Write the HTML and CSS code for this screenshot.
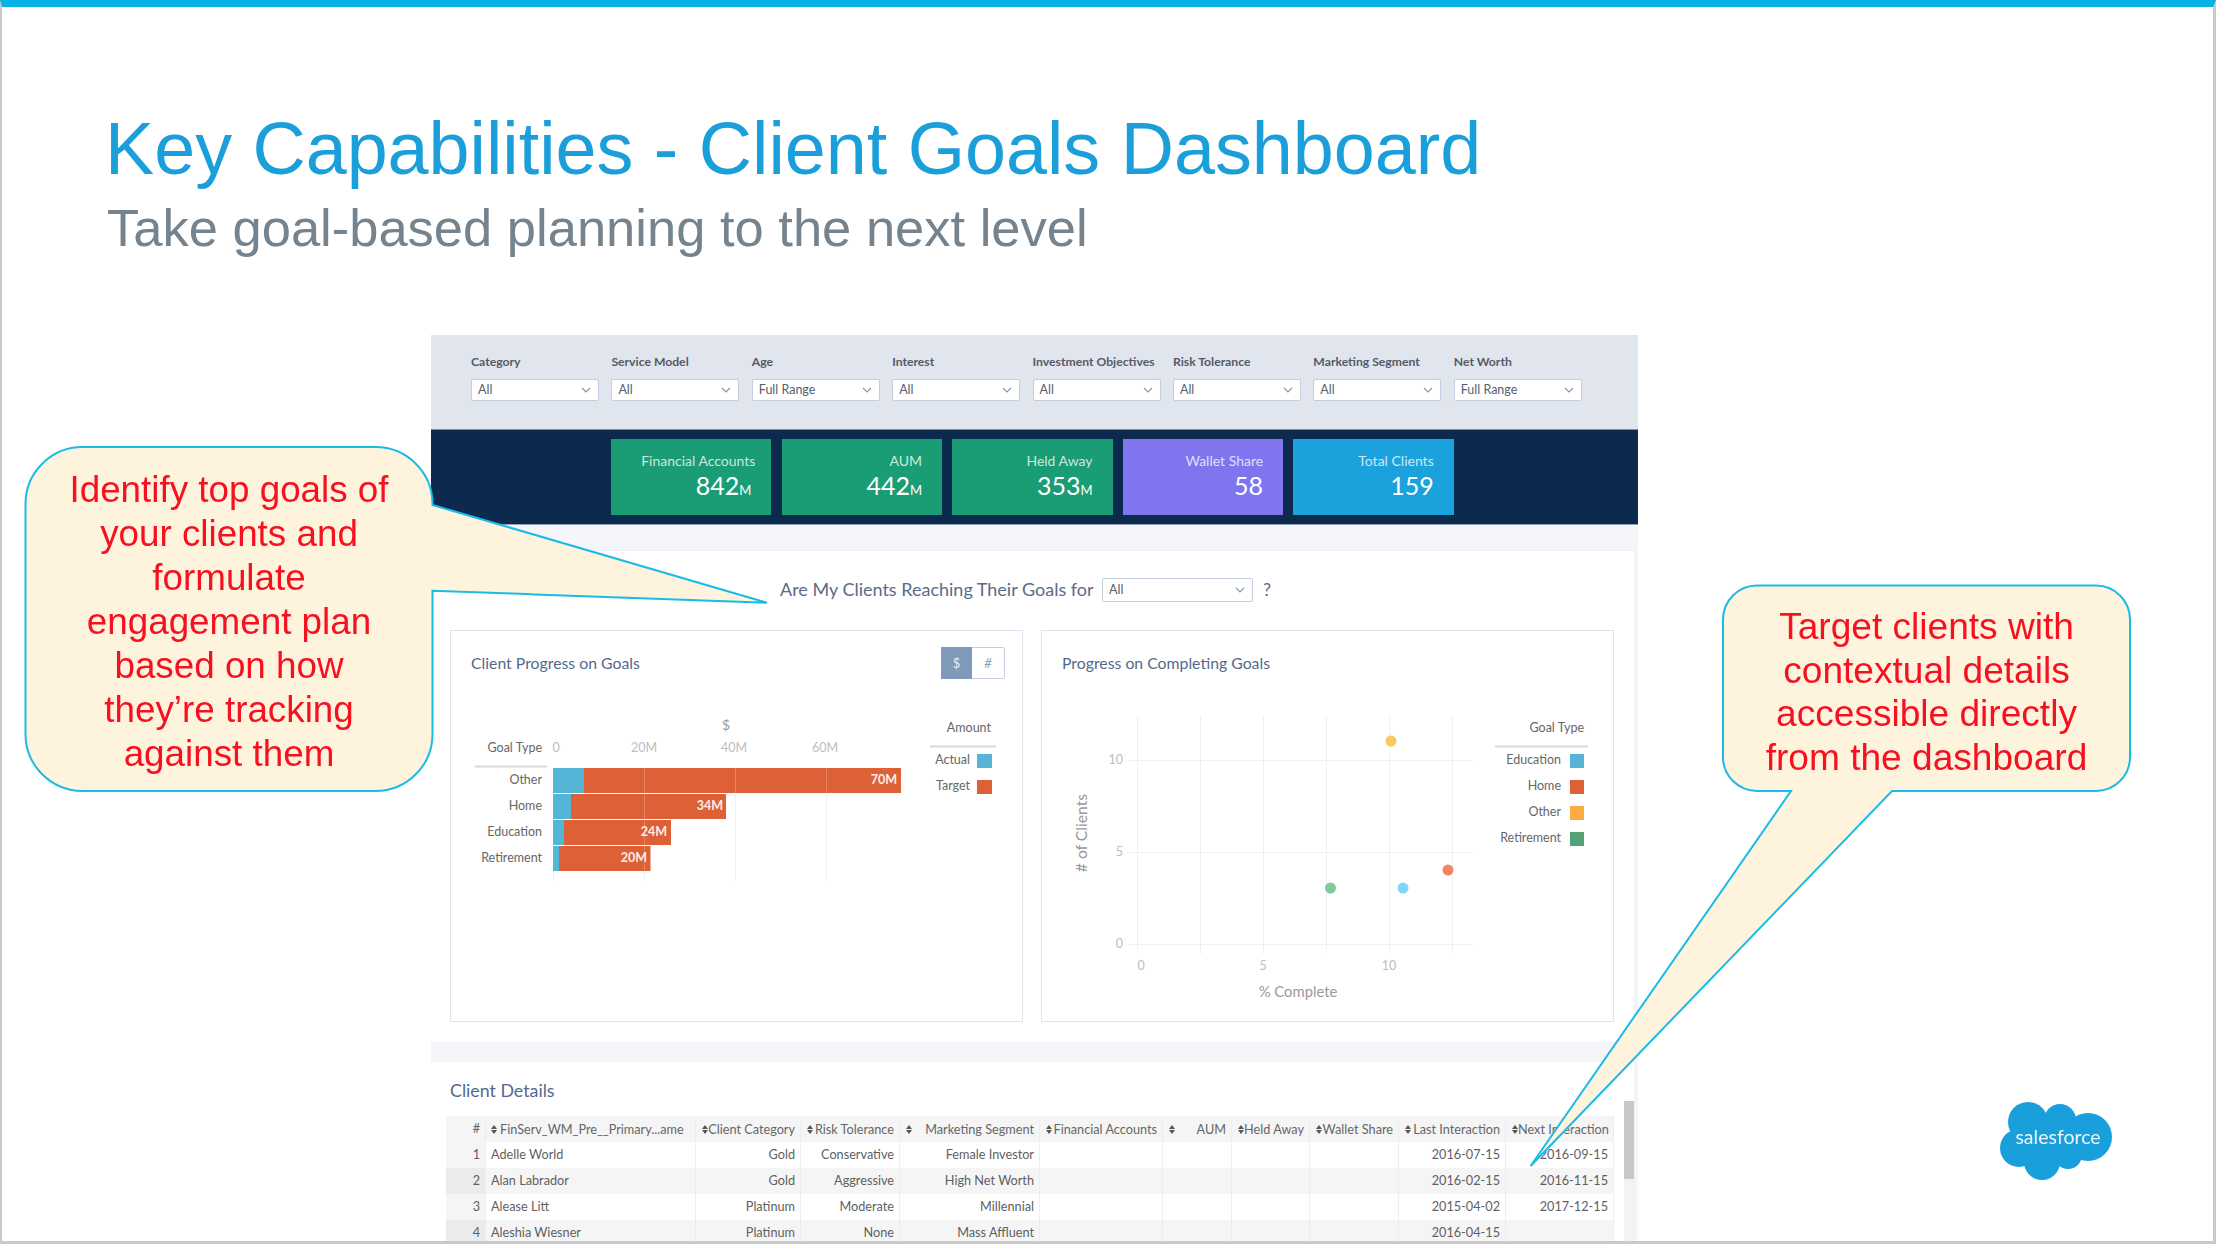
FILE: index.html
```html
<!DOCTYPE html>
<html lang="en">
<head>
<meta charset="utf-8">
<title>Key Capabilities - Client Goals Dashboard</title>
<link rel="stylesheet" href="styles.css">
</head>
<body>
<main class="slide">
  <header class="slide-head">
    <h1 class="slide-title">Key Capabilities - Client Goals Dashboard</h1>
    <p class="slide-sub">Take goal-based planning to the next level</p>
  </header>

  <section class="dash">
    <div class="filters">
      <div class="filter"><label class="filter-label">Category</label><div class="select"><span>All</span><svg class="chev" viewBox="0 0 10 6"><path d="M1 1l4 4 4-4"/></svg></div></div>
      <div class="filter"><label class="filter-label">Service Model</label><div class="select"><span>All</span><svg class="chev" viewBox="0 0 10 6"><path d="M1 1l4 4 4-4"/></svg></div></div>
      <div class="filter"><label class="filter-label">Age</label><div class="select"><span>Full Range</span><svg class="chev" viewBox="0 0 10 6"><path d="M1 1l4 4 4-4"/></svg></div></div>
      <div class="filter"><label class="filter-label">Interest</label><div class="select"><span>All</span><svg class="chev" viewBox="0 0 10 6"><path d="M1 1l4 4 4-4"/></svg></div></div>
      <div class="filter"><label class="filter-label">Investment Objectives</label><div class="select"><span>All</span><svg class="chev" viewBox="0 0 10 6"><path d="M1 1l4 4 4-4"/></svg></div></div>
      <div class="filter"><label class="filter-label">Risk Tolerance</label><div class="select"><span>All</span><svg class="chev" viewBox="0 0 10 6"><path d="M1 1l4 4 4-4"/></svg></div></div>
      <div class="filter"><label class="filter-label">Marketing Segment</label><div class="select"><span>All</span><svg class="chev" viewBox="0 0 10 6"><path d="M1 1l4 4 4-4"/></svg></div></div>
      <div class="filter"><label class="filter-label">Net Worth</label><div class="select"><span>Full Range</span><svg class="chev" viewBox="0 0 10 6"><path d="M1 1l4 4 4-4"/></svg></div></div>
    </div>

    <div class="kpis">
      <div class="kpi kpi-green"><div class="kpi-label kpi-label-wide">Financial Accounts</div><div class="kpi-value">842<small>M</small></div></div>
      <div class="kpi kpi-green"><div class="kpi-label">AUM</div><div class="kpi-value">442<small>M</small></div></div>
      <div class="kpi kpi-green"><div class="kpi-label">Held Away</div><div class="kpi-value">353<small>M</small></div></div>
      <div class="kpi kpi-purple"><div class="kpi-label">Wallet Share</div><div class="kpi-value">58</div></div>
      <div class="kpi kpi-blue"><div class="kpi-label">Total Clients</div><div class="kpi-value">159</div></div>
    </div>

    <div class="panel">
      <div class="question">
        <span class="question-text">Are My Clients Reaching Their Goals for</span>
        <div class="select select-q"><span>All</span><svg class="chev" viewBox="0 0 10 6"><path d="M1 1l4 4 4-4"/></svg></div>
        <span class="question-mark">?</span>
      </div>

      <div class="charts">
        <article class="card">
          <div class="card-head">
            <h2 class="card-title">Client Progress on Goals</h2>
            <div class="toggle"><span class="toggle-on">$</span><span class="toggle-off">#</span></div>
          </div>
          <svg class="plot" viewBox="451 690 571 330">
            <g class="grid">
              <path d="M553.500 767V880M644.500 767V880M735.500 767V880M826.500 767V880"/>
            </g>
            <text class="axis-title" x="726" y="729" text-anchor="middle">$</text>
            <text class="lbl" x="542" y="751" text-anchor="end">Goal Type</text>
            <g class="tick" text-anchor="middle">
              <text x="556" y="751">0</text>
              <text x="644" y="751">20M</text>
              <text x="734" y="751">40M</text>
              <text x="825" y="751">60M</text>
            </g>
            <path class="rule" d="M475 765.500H547M930 745.500H996"/>
            <g class="lbl" text-anchor="end">
              <text x="542" y="783">Other</text>
              <text x="542" y="809">Home</text>
              <text x="542" y="835">Education</text>
              <text x="542" y="861">Retirement</text>
              <text x="991" y="731">Amount</text>
              <text x="970" y="763">Actual</text>
              <text x="970" y="789">Target</text>
            </g>
            <rect class="c-red" x="553" y="767" width="348" height="25"/>
            <rect class="c-red" x="553" y="793" width="173" height="25"/>
            <rect class="c-red" x="553" y="819" width="118" height="25"/>
            <rect class="c-red" x="553" y="845" width="97.500" height="25"/>
            <rect class="c-blue" x="553" y="767" width="31" height="25"/>
            <rect class="c-blue" x="553" y="793" width="18" height="25"/>
            <rect class="c-blue" x="553" y="819" width="11" height="25"/>
            <rect class="c-blue" x="553" y="845" width="6" height="25"/>
            <path class="grid-over" d="M644.500 767V870M735.500 767V818M826.500 767V792"/>
            <g class="bar-val" text-anchor="end">
              <text x="897" y="783">70M</text>
              <text x="723" y="809">34M</text>
              <text x="667" y="835">24M</text>
              <text x="647" y="861">20M</text>
            </g>
            <rect class="c-blue" x="977" y="753" width="15" height="14"/>
            <rect class="c-red" x="977" y="779" width="15" height="14"/>
          </svg>
        </article>

        <article class="card">
          <div class="card-head">
            <h2 class="card-title">Progress on Completing Goals</h2>
          </div>
          <svg class="plot" viewBox="1042 690 571 330">
            <g class="grid">
              <path d="M1137.500 715V953M1200.500 715V953M1263.500 715V953M1326.500 715V953M1389.500 715V953M1452.500 715V953"/>
              <path d="M1127 759.500H1473M1127 851.500H1473M1127 943.500H1473"/>
            </g>
            <g class="tick" text-anchor="end">
              <text x="1123" y="763">10</text>
              <text x="1123" y="855">5</text>
              <text x="1123" y="947">0</text>
            </g>
            <g class="tick" text-anchor="middle">
              <text x="1141" y="969">0</text>
              <text x="1263" y="969">5</text>
              <text x="1389" y="969">10</text>
            </g>
            <text class="axis-title axis-x" x="1298" y="996" text-anchor="middle">% Complete</text>
            <text class="axis-title axis-y" x="1087" y="832" text-anchor="middle" transform="rotate(-90 1087 832)"># of Clients</text>
            <circle cx="1391" cy="740" r="5.500" fill="#f9c95f"/>
            <circle cx="1330.500" cy="887" r="5.500" fill="#7fc99b"/>
            <circle cx="1403" cy="887" r="5.500" fill="#7dd6f6"/>
            <circle cx="1448" cy="869" r="5.500" fill="#f58460"/>
            <path class="rule" d="M1495 745.500H1588"/>
            <g class="lbl" text-anchor="end">
              <text x="1584" y="731">Goal Type</text>
              <text x="1561" y="763">Education</text>
              <text x="1561" y="789">Home</text>
              <text x="1561" y="815">Other</text>
              <text x="1561" y="841">Retirement</text>
            </g>
            <rect class="c-blue" x="1570" y="753" width="14" height="14"/>
            <rect class="c-red" x="1570" y="779" width="14" height="14"/>
            <rect class="c-orange" x="1570" y="805" width="14" height="14"/>
            <rect class="c-green" x="1570" y="831" width="14" height="14"/>
          </svg>
        </article>
      </div>
    </div>

    <div class="details">
      <h2 class="details-title">Client Details</h2>
      <div class="table-wrap">
        <div class="table">
          <div class="row row-head">
            <div class="cell">#</div>
            <div class="cell cell-name"><i class="sort"></i>FinServ_WM_Pre__Primary...ame</div>
            <div class="cell cell-sort"><i class="sort"></i>Client Category</div>
            <div class="cell cell-sort"><i class="sort"></i>Risk Tolerance</div>
            <div class="cell cell-sort"><i class="sort"></i>Marketing Segment</div>
            <div class="cell cell-sort"><i class="sort"></i>Financial Accounts</div>
            <div class="cell cell-sort"><i class="sort"></i>AUM</div>
            <div class="cell cell-sort"><i class="sort"></i>Held Away</div>
            <div class="cell cell-sort"><i class="sort"></i>Wallet Share</div>
            <div class="cell cell-sort"><i class="sort"></i>Last Interaction</div>
            <div class="cell cell-sort"><i class="sort"></i>Next Interaction</div>
          </div>
          <div class="row">
            <div class="cell cell-idx">1</div><div class="cell cell-left">Adelle World</div><div class="cell">Gold</div><div class="cell">Conservative</div><div class="cell">Female Investor</div><div class="cell"></div><div class="cell"></div><div class="cell"></div><div class="cell"></div><div class="cell">2016-07-15</div><div class="cell">2016-09-15</div>
          </div>
          <div class="row row-alt">
            <div class="cell cell-idx">2</div><div class="cell cell-left">Alan Labrador</div><div class="cell">Gold</div><div class="cell">Aggressive</div><div class="cell">High Net Worth</div><div class="cell"></div><div class="cell"></div><div class="cell"></div><div class="cell"></div><div class="cell">2016-02-15</div><div class="cell">2016-11-15</div>
          </div>
          <div class="row">
            <div class="cell cell-idx">3</div><div class="cell cell-left">Alease Litt</div><div class="cell">Platinum</div><div class="cell">Moderate</div><div class="cell">Millennial</div><div class="cell"></div><div class="cell"></div><div class="cell"></div><div class="cell"></div><div class="cell">2015-04-02</div><div class="cell">2017-12-15</div>
          </div>
          <div class="row row-alt">
            <div class="cell cell-idx">4</div><div class="cell cell-left">Aleshia Wiesner</div><div class="cell">Platinum</div><div class="cell">None</div><div class="cell">Mass Affluent</div><div class="cell"></div><div class="cell"></div><div class="cell"></div><div class="cell"></div><div class="cell">2016-04-15</div><div class="cell"></div>
          </div>
        </div>
        <div class="scrollbar"><div class="scroll-thumb"></div></div>
      </div>
    </div>
  </section>

  <aside class="callout callout-a">
    <svg class="callout-shape" viewBox="24 445 746 349"><path d="M82.500 447H375.500A57 57 0 0 1 432.500 504V505L767 602.700 432.500 590.700V734A57 57 0 0 1 375.500 791H82.500A57 57 0 0 1 25.500 734V504A57 57 0 0 1 82.500 447Z"/></svg>
    <p class="callout-text"><span>Identify top goals of</span><span>your clients and</span><span>formulate</span><span>engagement plan</span><span>based on how</span><span>they’re tracking</span><span>against them</span></p>
  </aside>

  <aside class="callout callout-b">
    <svg class="callout-shape" viewBox="1528 584 604 584"><path d="M1757 585.500H2096A34 34 0 0 1 2130 619.500V757A34 34 0 0 1 2096 791H1892L1530.600 1166 1791 791H1757A34 34 0 0 1 1723 757V619.500A34 34 0 0 1 1757 585.500Z"/></svg>
    <p class="callout-text"><span>Target clients with</span><span>contextual details</span><span>accessible directly</span><span>from the dashboard</span></p>
  </aside>

  <svg class="logo" viewBox="1998 1100 116 82" role="img" aria-label="salesforce">
    <g fill="#1a9fdd">
      <circle cx="2028" cy="1122" r="20"/>
      <circle cx="2060" cy="1120" r="16"/>
      <circle cx="2088" cy="1137" r="24"/>
      <circle cx="2019" cy="1148" r="19"/>
      <circle cx="2042" cy="1162" r="18"/>
      <circle cx="2068" cy="1155" r="14"/>
      <rect x="2022" y="1120" width="60" height="36"/>
    </g>
    <text class="logo-text" x="2058" y="1144" text-anchor="middle">salesforce</text>
  </svg>
</main>
</body>
</html>
```

FILE: styles.css
```css
* { box-sizing: border-box; }
html, body { margin: 0; padding: 0; }
body { background: #fff; overflow: hidden; font-family: "Liberation Sans", Arial, sans-serif; }

.slide { position: relative; width: 2216px; height: 1244px; overflow: hidden; background: #fff; padding-top: 105px; }
.slide::after { content: ""; position: absolute; inset: 0; border: 2px solid #c9c9c9; border-top: 7px solid #08b1e6; border-right-width: 3px; border-bottom-width: 3px; pointer-events: none; z-index: 5; }

.slide-head { padding-left: 105px; filter: blur(.4px); }
.slide-title { margin: 0; font-size: 73.700px; line-height: 88px; font-weight: 400; color: #1a9fdb; }
.slide-sub { margin: 6px 0 0 2px; font-size: 52.500px; line-height: 58px; font-weight: 400; color: #74838d; }

.dash { width: 1207px; margin: 0 0 0 431px; position: absolute; top: 335px; left: 0; background: #f4f6f9; font-family: Lato, "Open Sans", sans-serif; filter: blur(.7px); }

.filters { height: 95px; padding: 19px 0 0 40px; background: #e0e5ee; border-bottom: 1px solid #7f8da0; display: grid; grid-template-columns: repeat(8, 128px); column-gap: 12.4px; }
.filter { min-width: 0; }
.filter-label { display: block; height: 16px; line-height: 16px; margin-bottom: 9px; font-size: 12.200px; font-weight: 700; color: #555a66; white-space: nowrap; }
.select { display: flex; align-items: center; justify-content: space-between; height: 22px; padding: 0 7px 0 6px; background: #fff; border: 1px solid #c3cede; border-radius: 2px; font-size: 12.500px; line-height: 18px; color: #555f70; }
.select span { margin-top: -1px; }
.chev { width: 10px; height: 6px; fill: none; stroke: #8797aa; stroke-width: 1.200; }

.kpis { height: 95px; padding: 9px 0 0 180px; background: #0b2a4e; border-bottom: 1px solid #93a2b4; display: flex; gap: 10.200px; }
.kpi { width: 160.400px; height: 76px; padding: 14px 20px 0 0; color: #fff; display: flex; flex-direction: column; align-items: flex-end; }
.kpi-green { background: #1a9d74; }
.kpi-purple { background: #7f76ef; }
.kpi-blue { background: #1ba2dd; }
.kpi-label { height: 16px; line-height: 16px; font-size: 14px; color: rgba(255,255,255,.78); white-space: nowrap; }
.kpi-label-wide { margin-right: -4px; }
.kpi-value { margin-top: 1px; height: 30px; line-height: 30px; font-size: 25px; font-weight: 400; }
.kpi-value small { font-size: 13px; }

.panel { margin-top: 25px; margin-right: 3px; height: 493px; background: #fff; border: 1px solid #eef1f6; border-left: 0; padding-top: 27px; }
.question { display: flex; align-items: center; height: 24px; padding-left: 349px; color: #5a6b88; font-size: 18px; }
.question-text { white-space: nowrap; width: 322px; margin-top: -2px; }
.select-q { width: 151px; height: 24px; }
.question-mark { margin-left: 10px; font-size: 18px; margin-top: -2px; }

.charts { display: flex; gap: 18px; margin-top: 28px; padding-left: 19px; }
.card { width: 573px; height: 392px; background: #fff; border: 1px solid #dde4ee; }
.card-head { display: flex; justify-content: space-between; align-items: flex-start; height: 60px; padding: 16px 17px 0 20px; }
.card-title { margin: -2px 0 0; font-size: 15.800px; line-height: 36px; font-weight: 400; color: #54698d; white-space: nowrap; }
.toggle { display: flex; height: 32px; border: 1px solid #c3cede; border-radius: 2px; font-size: 13px; line-height: 30px; text-align: center; }
.toggle-on { width: 31px; background: #7f99b9; color: #e8eef5; margin: -1px 0 -1px -1px; line-height: 32px; }
.toggle-off { width: 32px; color: #8aa0bd; font-style: italic; }
.plot { display: block; width: 571px; height: 330px; font-family: Lato, "Open Sans", sans-serif; }
.grid path { stroke: #f0f0f0; stroke-width: 1; fill: none; }
.grid-over { stroke: rgba(255,255,255,.22); stroke-width: 1; fill: none; }
.rule { stroke: #d8d8d8; stroke-width: 2; fill: none; }
.tick text { font-size: 12.500px; fill: #bdbdbd; }
.lbl, .lbl text { font-size: 12.500px; fill: #666; }
.axis-title { font-size: 14px; fill: #999; }
.axis-x { font-size: 14.800px; }
.axis-y { font-size: 15.700px; }
.bar-val text { font-size: 12.500px; font-weight: 700; fill: #fbeee9; }
.c-red { fill: #de6037; }
.c-blue { fill: #54b5d6; }
.c-orange { fill: #fdab40; }
.c-green { fill: #54a077; }

.details { margin-top: 18px; margin-right: 3px; height: 190px; background: #fff; border: 1px solid #eef1f6; border-left: 0; border-bottom: 0; padding: 15px 0 0 15px; }
.details-title { margin: 0; height: 26px; line-height: 26px; font-size: 17.800px; font-weight: 400; color: #54698d; padding-left: 4px; }
.table-wrap { position: relative; margin-top: 13px; }
.table { width: 1168px; font-size: 12.700px; color: #5f5f5f; }
.row { display: grid; grid-template-columns: 40px 210px 105px 99px 140px 123px 69px 78px 89px 107px 108px; height: 26px; line-height: 25px; background: #fff; }
.row-head { background: #f5f5f5; color: #666; }
.row-alt { background: #f5f5f5; }
.cell { padding: 0 5px; text-align: right; border-right: 1px solid #eeeeee; white-space: nowrap; overflow: hidden; }
.cell-idx { background: #f5f5f5; }
.row-alt .cell-idx { background: #ebebeb; }
.cell-left { text-align: left; }
.cell-sort { display: flex; justify-content: space-between; align-items: center; padding-left: 6px; }
.cell-name { display: flex; align-items: center; gap: 3px; text-align: left; }
.sort { position: relative; flex: none; width: 6px; height: 9px; }
.sort::before, .sort::after { content: ""; position: absolute; left: 0; border-left: 3px solid transparent; border-right: 3px solid transparent; }
.sort::before { top: 0; border-bottom: 4px solid #555; }
.sort::after { bottom: 0; border-top: 4px solid #555; }

.scrollbar { position: absolute; left: 1178px; top: -15px; width: 10px; height: 160px; background: #f3f3f3; }
.scroll-thumb { height: 78px; background: #c8c8c8; }

.callout { position: absolute; z-index: 3; filter: blur(.4px); }
.callout-a { left: 24px; top: 445px; width: 746px; height: 349px; }
.callout-b { left: 1528px; top: 584px; width: 604px; height: 584px; }
.callout-shape { position: absolute; inset: 0; width: 100%; height: 100%; }
.callout-shape path { fill: #fef3dd; stroke: #19bbe8; stroke-width: 2; }
.callout-text { position: relative; margin: 0; width: 407px; text-align: center; color: #f7101f; font-size: 36.800px; line-height: 44px; }
.callout-text span { display: block; white-space: nowrap; }
.callout-a .callout-text { left: 1.500px; padding-top: 23px; }
.callout-b .callout-text { left: 195px; padding-top: 21px; font-size: 37.100px; line-height: 43.500px; }

.logo { position: absolute; left: 1998px; top: 1100px; width: 116px; height: 82px; z-index: 2; filter: blur(.4px); }
.logo-text { font-family: Lato, "Open Sans", sans-serif; font-size: 19.500px; fill: #eaf6fc; }
```
